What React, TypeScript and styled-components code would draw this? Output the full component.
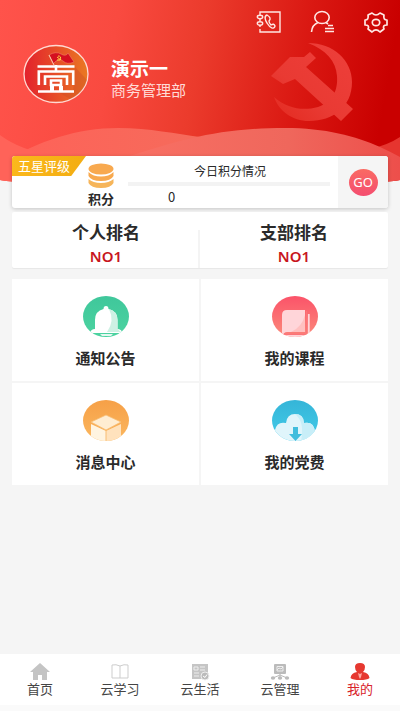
import React from "react";
import styled, { createGlobalStyle } from "styled-components";

const GlobalStyle = createGlobalStyle`
  * { box-sizing: border-box; }
  body {
    margin: 0;
    background: #f5f5f5;
    color: #2a2a2a;
    font-family: "Noto Sans CJK SC", sans-serif;
  }
  button { font: inherit; color: inherit; border: 0; padding: 0; background: none; cursor: pointer; }
  svg { display: block; }
`;

const Page = styled.div`
  display: flex;
  flex-direction: column;
  min-height: 100vh;
`;

const Header = styled.header`
  position: relative;
  height: 182px;
  padding: 8px 10px 0 20px;
`;

const Backdrop = styled.svg`
  position: absolute;
  inset: 0;
  width: 100%;
  height: 100%;
`;

const Emblem = styled.svg`
  position: absolute;
  top: 42px;
  right: 47px;
`;

const Toolbar = styled.div`
  position: relative;
  display: flex;
  justify-content: flex-end;
  gap: 26px;
`;

const ToolButton = styled.button`
  width: 28px;
  height: 28px;
`;

const Profile = styled.div`
  position: relative;
  display: flex;
  align-items: center;
  gap: 21px;
  padding: 8px 2px;
`;

const Identity = styled.div`
  padding-top: 8px;
`;

const Name = styled.h1`
  margin: 0;
  font-size: 19px;
  line-height: 24px;
  font-weight: 700;
  color: #fff;
`;

const Department = styled.p`
  margin: 0;
  font-size: 15px;
  line-height: 20px;
  color: #ffdcd8;
`;

const Main = styled.main`
  position: relative;
  flex: 1;
  margin-top: -26px;
  padding: 0 12px;
`;

const ScoreCard = styled.section`
  display: flex;
  height: 52px;
  background: #fff;
  border-radius: 3px;
  overflow: hidden;
  box-shadow: 0 1px 4px rgba(0, 0, 0, 0.2);
`;

const Ribbon = styled.div`
  width: 74px;
  height: 20px;
  padding-left: 6px;
  background: linear-gradient(90deg, #fbb81c, #f3ad12);
  clip-path: polygon(0 0, 100% 0, 80% 100%, 0 100%);
  color: #fff;
  font-size: 13px;
  line-height: 19px;
`;

const Points = styled.div`
  display: flex;
  flex-direction: column;
  align-items: center;
  gap: 2px;
  width: 30px;
  padding-top: 7px;
  font-size: 13px;
  line-height: 16px;
  font-weight: 700;
`;

const Today = styled.div`
  flex: 1;
  padding: 6px 8px 0 12px;
  font-size: 12px;
  line-height: 18px;
`;

const TodayTitle = styled.div`
  padding-left: 2px;
  text-align: center;
`;

const Track = styled.div`
  height: 4px;
  margin: 2px 0;
  background: #f3f3f3;
`;

const TodayValue = styled.div`
  padding-left: 40px;
  font-size: 13px;
`;

const GoPanel = styled.div`
  display: flex;
  align-items: center;
  justify-content: center;
  width: 50px;
  background: #f5f5f5;
`;

const GoButton = styled.button`
  width: 29px;
  height: 27px;
  border-radius: 50%;
  && {
    background: linear-gradient(#fa6a63, #f44e70);
    color: #fff;
    font-family: "Noto Sans", sans-serif;
    font-size: 13px;
    line-height: 26px;
  }
`;

const RankCard = styled.section`
  display: grid;
  grid-template-columns: 1fr 1fr;
  height: 56px;
  margin-top: 4px;
  background: #fff;
  border-radius: 2px;
  box-shadow: 0 1px 1px rgba(0, 0, 0, 0.06);
`;

const Rank = styled.div<{ $divided?: boolean }>`
  padding: 7px 0 0;
  text-align: center;
  font-size: 17px;
  line-height: 26px;
  font-weight: 700;
  background: ${(p) =>
    p.$divided ? "linear-gradient(#f4f4f4, #f4f4f4) right bottom / 2px 38px no-repeat" : "none"};
`;

const RankValue = styled.div`
  color: #c8161d;
  font-family: "Noto Sans", sans-serif;
  font-size: 15px;
  line-height: 22px;
  font-weight: 600;
`;

const Grid = styled.nav`
  display: grid;
  grid-template-columns: 1fr 1fr;
  gap: 2px;
  margin-top: 11px;
`;

const Tile = styled.button`
  && {
    display: flex;
    flex-direction: column;
    align-items: center;
    height: 102px;
    padding-top: 17px;
    background: #fff;
    font-size: 15px;
    line-height: 22px;
    font-weight: 700;
  }
  svg { margin-bottom: 10px; }
`;

const TabBar = styled.nav`
  display: grid;
  grid-template-columns: repeat(5, 1fr);
  height: 57px;
  background: linear-gradient(#fff 51px, #fafafa 51px);
`;

const Tab = styled.button<{ $active?: boolean }>`
  && {
    display: flex;
    flex-direction: column;
    align-items: center;
    padding-top: 8px;
    font-size: 13px;
    line-height: 14px;
    color: ${(p) => (p.$active ? "#d8232a" : "#444")};
  }
`;

const HeaderArt = () => (
  <Backdrop viewBox="0 0 400 182" preserveAspectRatio="none" aria-hidden="true">
    <defs>
      <linearGradient id="base" x1="0" x2="1" y1="0" y2="0.08">
        <stop offset="0" stopColor="#ff534b" />
        <stop offset="0.3" stopColor="#f94a40" />
        <stop offset="0.52" stopColor="#eb3b2c" />
        <stop offset="0.78" stopColor="#da1812" />
        <stop offset="1" stopColor="#c90000" />
      </linearGradient>
      <linearGradient id="wave" x1="0" x2="1">
        <stop offset="0" stopColor="#f97064" />
        <stop offset="0.6" stopColor="#ef675c" />
        <stop offset="1" stopColor="#ed4f4b" />
      </linearGradient>
      <linearGradient id="hill" x1="0" x2="1">
        <stop offset="0" stopColor="#ff6258" />
        <stop offset="1" stopColor="#f46c5c" />
      </linearGradient>
      <clipPath id="curve">
        <path d="M0 0H400V180Q388 182 370 182H30Q12 182 0 180Z" />
      </clipPath>
    </defs>
    <g clipPath="url(#curve)">
      <path d="M0 0H400V182H0Z" fill="url(#base)" />
      <path d="M400 137Q388 145 370 149V182H400Z" fill="#e6352f" />
      <path d="M0 182V164C40 140 78 128 118 128C150 128 176 134 200 137L230 182Z" fill="url(#hill)" />
      <path d="M0 135Q20 150 52 155L80 182H0Z" fill="#ff6359" />
      <path d="M130 156C180 140 220 128 285 128C325 128 356 136 380 147Q391 152 400 157V182H120Z" fill="url(#wave)" />
    </g>
  </Backdrop>
);

const PartyEmblem = () => (
  <Emblem width="82" height="80" viewBox="0 0 82 80" aria-hidden="true">
    <defs>
      <linearGradient id="emblem" x1="1" y1="0" x2="0" y2="1">
        <stop offset="0" stopColor="#ee3f3b" />
        <stop offset="0.6" stopColor="#e93a33" />
        <stop offset="1" stopColor="#e32a20" />
      </linearGradient>
    </defs>
    <g fill="url(#emblem)">
      <path d="M37 1C62 1 81 18 81 40C81 65 62 79 38 79C21 79 8 69 3 55C17 67 32 69 47 65C62 60 67 48 66 34C65 19 55 8 37 1Z" />
      <path d="M0 34L19 15L33 15L39 10L45 16L35 25L82 67L70 79L24 37L12 42Z" />
    </g>
  </Emblem>
);

const Avatar = () => (
  <svg width="68" height="60" viewBox="0 0 68 60" role="img" aria-label="头像">
    <defs>
      <linearGradient id="avatar" x1="0" x2="1">
        <stop offset="0" stopColor="#e3212d" />
        <stop offset="1" stopColor="#ea7922" />
      </linearGradient>
    </defs>
    <ellipse cx="34" cy="30" rx="32" ry="28.5" fill="url(#avatar)" stroke="#ffd9d2" strokeWidth="1.3" />
    <path d="M53 23L65 36Q61 50 48 55L36 48H51Z" fill="#c84724" opacity="0.35" />
    <path d="M27 11Q34 7 39 10T46 9L52 18Q45 21 41 17T31 20Z" fill="#d50f20" stroke="#f58b70" strokeWidth="0.5" />
    <path d="M27 11L32 21" stroke="#ffd1b0" />
    <path d="M36 12Q40 12 38 16H35M35 13L39 16" fill="none" stroke="#ffd342" strokeWidth="1" />
    <g fill="none" stroke="#fff" strokeWidth="2.6">
      <path d="M15.500 22.500H52.500M34 21V27M16.800 41V27.500H51.200V41" />
      <path d="M23 41V32.500H45V41" />
      <path d="M29 36.500H39V41H29Z" />
      <path d="M16 47.500H52" />
    </g>
    <path d="M28 42H32V47H28ZM37 42H41V47H37Z" fill="#fff" />
  </svg>
);

const ContactsIcon = () => (
  <svg width="28" height="28" viewBox="0 0 28 28" fill="none" stroke="#ffe7e3" strokeWidth="1.4" aria-hidden="true">
    <path d="M6 7V4H26V24H6V21M6 11V13M6 19V17" />
    <ellipse cx="6" cy="9" rx="2.7" ry="1.7" />
    <ellipse cx="6" cy="15.5" rx="2.7" ry="1.7" />
    <path d="M13 7C10 8 11 12 13 15C16 20 20 22 21 18Q20 15 17 17Q15 15 15 13Q18 10 13 7Z" strokeLinejoin="round" />
  </svg>
);

const PersonListIcon = () => (
  <svg width="28" height="28" viewBox="0 0 28 28" fill="none" stroke="#ffe7e3" strokeWidth="1.6" aria-hidden="true">
    <ellipse cx="14" cy="9.5" rx="7.2" ry="6" />
    <path d="M3.500 24Q4 17 10 14.500M18 14.500L20 16M20 17.500H25M17 20.500H26M17 23.500H26" />
  </svg>
);

const GearIcon = () => (
  <svg width="28" height="28" viewBox="0 0 28 28" fill="none" stroke="#ffe7e3" strokeWidth="1.7" strokeLinejoin="round" aria-hidden="true">
    <path d="M10 5Q14 9 18 5L22 7Q21 12 25 12V17Q20 17 22 21L18 24Q14 20 10 24L6 21Q8 17 3 17V12Q7 12 6 7Z" />
    <ellipse cx="14" cy="14.500" rx="3.700" ry="3.200" />
  </svg>
);

const CoinsIcon = () => (
  <svg width="26" height="26" viewBox="0 0 26 26" fill="#f8a94f" aria-hidden="true">
    <ellipse cx="13" cy="6" rx="12.500" ry="5.500" />
    <path d="M0.500 9Q5 13.500 13 13.500T25.500 9V13Q23 18 13 18T0.500 13Z" />
    <path d="M0.500 16Q5 20 13 20T25.500 16V20Q23 25 13 25T0.500 20Z" fill="#f6b55a" />
  </svg>
);

type Kind = "bell" | "book" | "box" | "cloud";

const colours: Record<Kind, [string, string]> = {
  bell: ["#3fc79b", "#4cd3a0"],
  book: ["#fb5369", "#fb8a7b"],
  box: ["#f6a047", "#fbb75f"],
  cloud: ["#35b5d8", "#43cce9"],
};

const TileIcon = ({ kind }: { kind: Kind }) => (
  <svg width="46" height="41" viewBox="0 0 46 41" aria-hidden="true">
    <defs>
      <linearGradient id={`fill-${kind}`} x2="0" y2="1">
        <stop offset="0" stopColor={colours[kind][0]} />
        <stop offset="1" stopColor={colours[kind][1]} />
      </linearGradient>
      <clipPath id={`clip-${kind}`}>
        <ellipse cx="23" cy="20.500" rx="23" ry="20.500" />
      </clipPath>
    </defs>
    <g clipPath={`url(#clip-${kind})`}>
      <path d="M0 0H46V41H0Z" fill={`url(#fill-${kind})`} />
      {kind === "bell" && (
        <>
          <path d="M20.500 13Q20.500 10 23 10T25.500 13Q34.500 15 34.500 24V33Q38 33 40 37H7Q8 33 12 33V24Q12 15 20.500 13Z" fill="#fff" />
          <path d="M26 13Q34.500 15 34.500 24V33L38 36H24Q32 25 26 13Z" fill="#cef1e4" />
          <path d="M17 38H30L28 40H19Z" fill="#e5f8f1" />
        </>
      )}
      {kind === "book" && (
        <>
          <path d="M10 41V19Q10 14 15 14H33V36H15Q12 36 12 39H37V41Z" fill="#ffd5d9" />
          <path d="M33 14V36H19Q30 31 33 19Z" fill="#ffc0c0" />
          <path d="M34.500 15V37H15Q12 37 12 38.500H35" fill="none" stroke="#fb7479" strokeWidth="1.200" />
          <path d="M36.800 18V39" stroke="#ffd5d9" strokeWidth="1.800" />
        </>
      )}
      {kind === "box" && (
        <>
          <path d="M8 24L23 31V41H8Z" fill="#fff4e1" />
          <path d="M38 24L23 31V41H38Z" fill="#ffe2bd" />
          <path d="M8 22L23 15L38 22L23 30Z" fill="#ffedd2" stroke="#f8bd74" strokeWidth="0.8" />
          <path d="M23 30V41" stroke="#f8bd74" />
        </>
      )}
      {kind === "cloud" && (
        <>
          <path d="M3 41V30Q5 21 14 23Q15 14 23 14T32 23Q42 21 43 32V41Z" fill="#e0f5fb" />
          <path d="M23 14Q32 14 32 23Q42 21 43 32V41H29Q33 22 23 14Z" fill="#c8eef8" />
          <path d="M21 27H26V34H30L23.500 41L17 34H21Z" fill="#40bddd" />
        </>
      )}
    </g>
  </svg>
);

const HomeIcon = () => (
  <svg width="22" height="20" viewBox="0 0 22 20" fill="#c4c4c4" aria-hidden="true">
    <path d="M11 1L21 10H18V18H13V13H9V18H4V10H1Z" />
  </svg>
);
const StudyIcon = () => (
  <svg width="22" height="20" viewBox="0 0 22 20" fill="none" stroke="#cdcdcd" aria-hidden="true">
    <path d="M11 4Q7 2 3 3V16H19V3Q15 2 11 4ZM11 4V16" />
  </svg>
);
const LifeIcon = () => (
  <svg width="22" height="20" viewBox="0 0 22 20" aria-hidden="true">
    <rect x="3" y="2" width="16" height="15" fill="#c5c5c5" />
    <path d="M5 5H9V8H5ZM5 11H10M5 14H10M11 5H16M11 8H16" fill="none" stroke="#eee" />
    <circle cx="16" cy="14" r="4" fill="#bbb" stroke="#eee" />
    <path d="M14 14L16 15.500L18 12.500" fill="none" stroke="#fff" />
  </svg>
);
const ManageIcon = () => (
  <svg width="22" height="20" viewBox="0 0 22 20" aria-hidden="true">
    <rect x="5" y="2" width="12" height="10" rx="1" fill="#bbb" />
    <path d="M8 4.500H14V9H8ZM8 8L10 6L12 7L14 5" fill="none" stroke="#eee" />
    <path d="M11 11V16M11 13L4 16M11 13L18 16" fill="none" stroke="#bbb" />
    <g fill="#bbb">
      <ellipse cx="4" cy="16" rx="2.200" ry="1.700" />
      <ellipse cx="11" cy="16" rx="2.200" ry="1.700" />
      <ellipse cx="18" cy="16" rx="2.200" ry="1.700" />
    </g>
  </svg>
);
const MineIcon = () => (
  <svg width="22" height="20" viewBox="0 0 22 20" fill="#e63830" aria-hidden="true">
    <path d="M11 1Q16 1 16 5Q16 8 14 10Q20 11 20.500 16Q18 18 11 18T1.500 16Q2 11 8 10Q6 8 6 5Q6 1 11 1Z" />
    <path d="M9 11L11 12L13 11L12 15L11 17L10 15Z" fill="#ffaaa4" />
  </svg>
);

const tiles: { label: string; kind: Kind }[] = [
  { label: "通知公告", kind: "bell" },
  { label: "我的课程", kind: "book" },
  { label: "消息中心", kind: "box" },
  { label: "我的党费", kind: "cloud" },
];

const tabs = [
  { label: "首页", Icon: HomeIcon },
  { label: "云学习", Icon: StudyIcon },
  { label: "云生活", Icon: LifeIcon },
  { label: "云管理", Icon: ManageIcon },
  { label: "我的", Icon: MineIcon, active: true },
];

export default function App() {
  return (
    <Page>
      <GlobalStyle />
      <Header>
        <HeaderArt />
        <PartyEmblem />
        <Toolbar>
          <ToolButton aria-label="通讯录"><ContactsIcon /></ToolButton>
          <ToolButton aria-label="个人资料"><PersonListIcon /></ToolButton>
          <ToolButton aria-label="设置"><GearIcon /></ToolButton>
        </Toolbar>
        <Profile>
          <Avatar />
          <Identity>
            <Name>演示一</Name>
            <Department>商务管理部</Department>
          </Identity>
        </Profile>
      </Header>
      <Main>
        <ScoreCard>
          <Ribbon>五星评级</Ribbon>
          <Points><CoinsIcon />积分</Points>
          <Today>
            <TodayTitle>今日积分情况</TodayTitle>
            <Track />
            <TodayValue>0</TodayValue>
          </Today>
          <GoPanel><GoButton>GO</GoButton></GoPanel>
        </ScoreCard>
        <RankCard>
          <Rank $divided>个人排名<RankValue>NO1</RankValue></Rank>
          <Rank>支部排名<RankValue>NO1</RankValue></Rank>
        </RankCard>
        <Grid>
          {tiles.map(({ label, kind }) => (
            <Tile key={label}><TileIcon kind={kind} />{label}</Tile>
          ))}
        </Grid>
      </Main>
      <TabBar>
        {tabs.map(({ label, Icon, active }) => (
          <Tab key={label} $active={active} aria-current={active ? "page" : undefined}>
            <Icon />{label}
          </Tab>
        ))}
      </TabBar>
    </Page>
  );
}
